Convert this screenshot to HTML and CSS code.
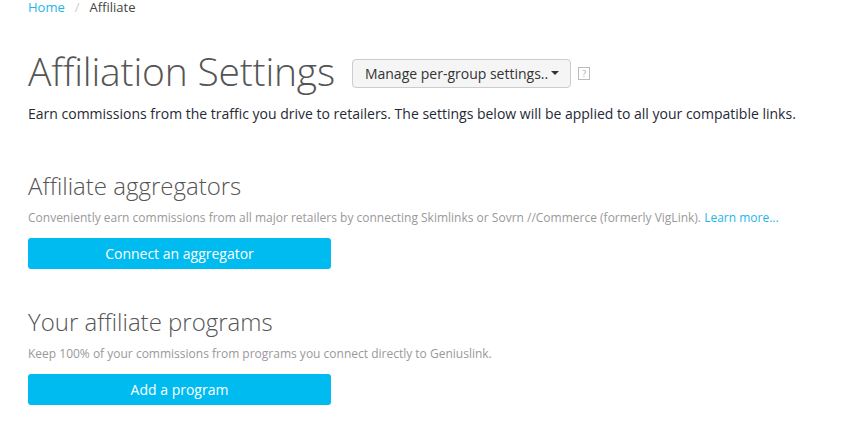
FILE: index.html
```html
<!DOCTYPE html>
<html>
<head>
<meta charset="utf-8">
<link rel="stylesheet" href="styles.css">
</head>
<body>
<div class="page">
  <nav class="breadcrumb">
    <a class="crumb-link" href="#">Home</a>
    <span class="sep">/</span>
    <span class="crumb-current">Affiliate</span>
  </nav>
  <div class="title-row">
    <h1 class="title">Affiliation Settings</h1>
    <button class="manage-btn">Manage per-group settings.. <span class="caret"></span></button>
    <span class="help">?</span>
  </div>
  <p class="lead">Earn commissions from the traffic you drive to retailers. The settings below will be applied to all your compatible links.</p>

  <section class="section first">
    <h2 class="section-title">Affiliate aggregators</h2>
    <p class="muted">Conveniently earn commissions from all major retailers by connecting Skimlinks or Sovrn //Commerce (formerly VigLink). <a class="link" href="#">Learn more...</a></p>
    <button class="primary-btn">Connect an aggregator</button>
  </section>

  <section class="section">
    <h2 class="section-title">Your affiliate programs</h2>
    <p class="muted">Keep 100% of your commissions from programs you connect directly to Geniuslink.</p>
    <button class="primary-btn">Add a program</button>
  </section>
</div>
</body>
</html>
```

FILE: styles.css
```css
* { box-sizing: border-box; }
html, body { margin: 0; padding: 0; background: #fff; }
body {
  font-family: "Open Sans", "Liberation Sans", sans-serif;
  color: #222;
}
.page {
  padding: 0 28px;
}
.breadcrumb {
  display: flex;
  align-items: center;
  gap: 10px;
  font-size: 13px;
  line-height: 18px;
  height: 18px;
  margin-top: -2px;
}
.crumb-link { color: #1fb4ea; text-decoration: none; }
.sep { color: #ccc; }
.crumb-current { color: #444; }
.title-row {
  display: flex;
  align-items: center;
  margin-top: 32px;
  height: 46px;
}
.title {
  margin: 0;
  font-size: 39px;
  font-weight: 300;
  color: #555;
  line-height: 46px;
  letter-spacing: -0.2px;
}
.manage-btn {
  margin-left: 17px;
  margin-top: 4px;
  height: 29px;
  padding: 0 11px 0 12px;
  font-family: inherit;
  font-size: 14px;
  color: #333;
  background: #f5f5f5;
  border: 1px solid #ccc;
  border-radius: 4px;
  display: flex;
  align-items: center;
  gap: 3px;
}
.caret {
  width: 0; height: 0;
  border-left: 4px solid transparent;
  border-right: 4px solid transparent;
  border-top: 4px solid #333;
}
.help {
  margin-left: 7px;
  margin-top: 4px;
  width: 12px;
  height: 13px;
  border: 1px solid #bbb;
  font-size: 9px;
  line-height: 11px;
  color: #aaa;
  text-align: center;
}
.lead {
  margin: 10px 0 0;
  font-size: 14px;
  line-height: 20px;
  color: #1f2a36;
}
.section { margin-top: 39px; }
.section.first { margin-top: 48px; }
.section-title {
  margin: 0;
  font-size: 24px;
  font-weight: 300;
  color: #555;
  line-height: 28px;
}
.muted {
  margin: 9px 0 0;
  font-size: 12px;
  line-height: 18px;
  color: #999;
}
.link { color: #1fb4ea; text-decoration: none; }
.primary-btn {
  display: block;
  margin-top: 11px;
  width: 303px;
  height: 31px;
  border: none;
  border-radius: 3px;
  background: #00bbf0;
  color: #fff;
  font-family: inherit;
  font-size: 14px;
}
```
